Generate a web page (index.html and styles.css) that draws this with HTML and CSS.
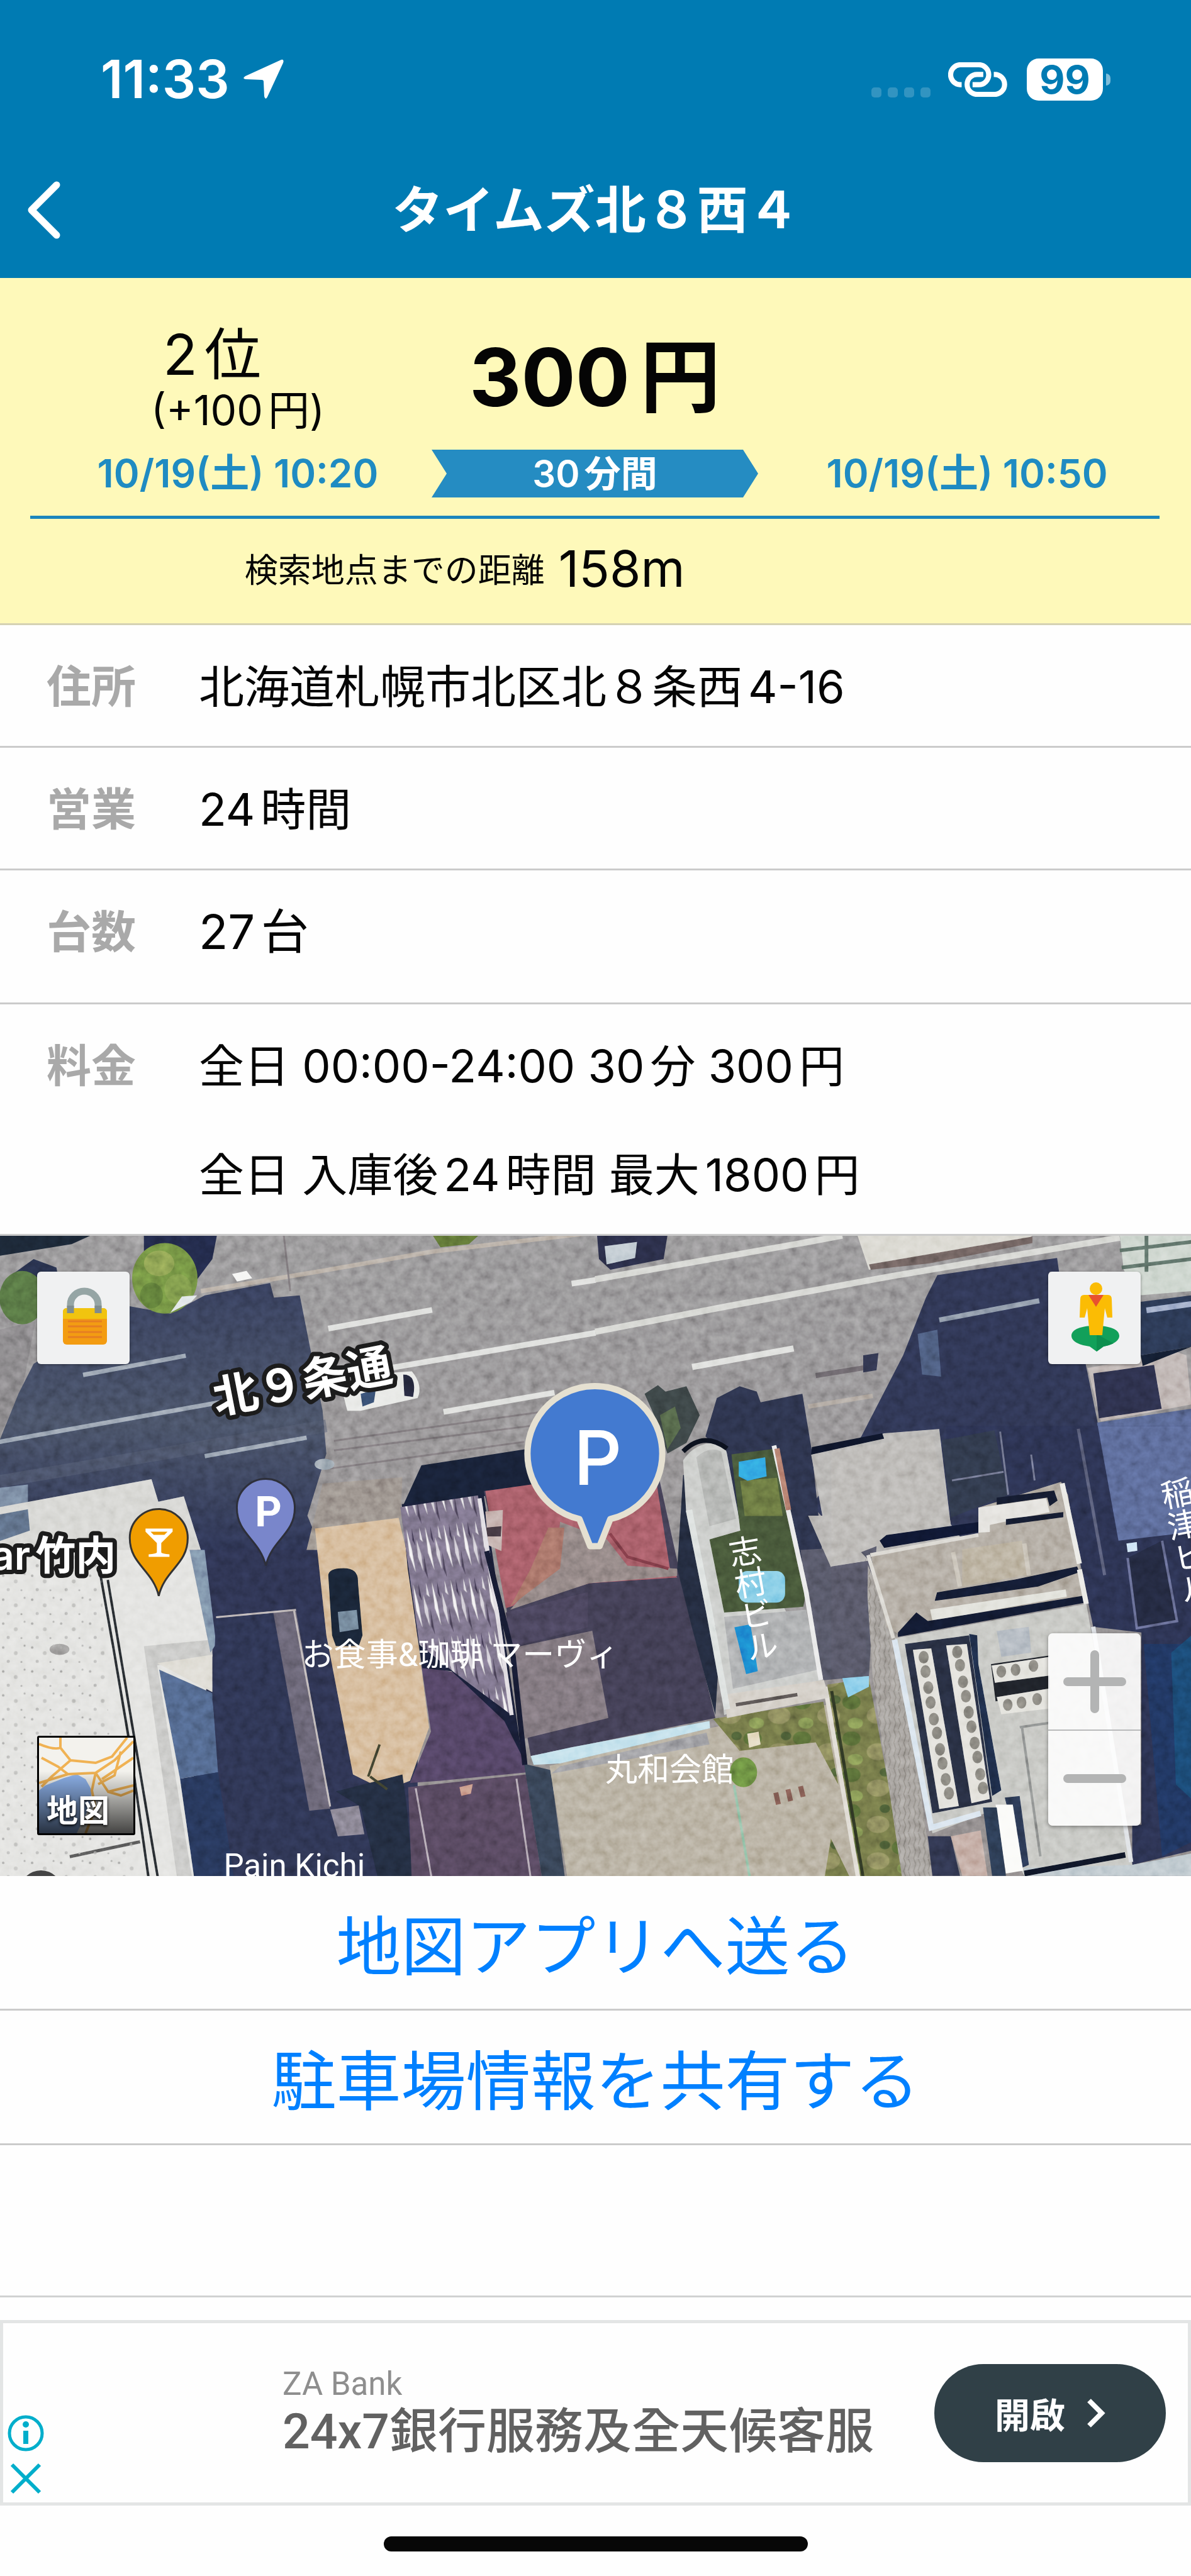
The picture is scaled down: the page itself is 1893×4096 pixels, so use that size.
FILE: index.html
```html
<!DOCTYPE html>
<html lang="ja">
<head>
<meta charset="utf-8">
<meta name="viewport" content="width=device-width, initial-scale=1">
<title>タイムズ北８西４</title>
<link rel="stylesheet" href="styles.css">
</head>
<body>
<header class="top">
  <div class="status">
    <div class="status-left">
      <span class="clock">11:33</span>
      <svg class="arrow" viewBox="0 0 64 64" aria-hidden="true"><path d="M60 1Q65 0 63 6L38 60Q35 66 33 59L32 36Q32 33 29 33L4 32Q-3 31 3 27Z" fill="#fff"/></svg>
    </div>
    <div class="status-right">
      <span class="dots"><i></i><i></i><i></i><i></i></span>
      <svg class="link" viewBox="447 122 286 168" aria-hidden="true"><g fill="none" stroke="#fff" stroke-width="25"><path d="M512 231H507A48.500 48.500 0 0 1 507 134H595A48.500 48.500 0 0 1 595 231H565"/><path d="M617 181H587A48.500 48.500 0 0 0 587 278H672A48.500 48.500 0 0 0 672 181H668"/></g></svg>
      <span class="battery">99</span>
    </div>
  </div>
  <nav class="nav">
    <button class="back" aria-label="戻る"><svg viewBox="0 0 54 92" aria-hidden="true"><path d="M48 6L8 46L48 86" fill="none" stroke="#fff" stroke-width="11" stroke-linecap="round" stroke-linejoin="round"/></svg></button>
    <h1>タイムズ北８西４</h1>
  </nav>
</header>

<main>
  <section class="summary">
    <div class="cols price-row">
      <div class="rank"><p class="place">2位</p><p class="diff">(+100円)</p></div>
      <p class="price">300円</p>
    </div>
    <div class="cols time-row">
      <time>10/19(土) 10:20</time>
      <span class="span">30分間</span>
      <time>10/19(土) 10:50</time>
    </div>
    <p class="distance"><span>検索地点までの距離</span> <b>158m</b></p>
  </section>

  <dl class="info">
    <div><dt>住所</dt><dd>北海道札幌市北区北８条西4-16</dd></div>
    <div><dt>営業</dt><dd>24時間</dd></div>
    <div class="tall"><dt>台数</dt><dd>27台</dd></div>
    <div><dt>料金</dt><dd>全日 00:00-24:00 30分 300円<br>全日 入庫後24時間 最大1800円</dd></div>
  </dl>

  <section class="map">
    <svg class="aerial" viewBox="0 0 1893 1017" preserveAspectRatio="xMidYMid slice">
      <defs>
        <linearGradient id="road" x1="0" y1="0" x2="0" y2="1"><stop offset="0" stop-color="#858385"/><stop offset="1" stop-color="#7c7878"/></linearGradient>
        <linearGradient id="shade" x1="0" y1="0" x2="0" y2="1"><stop offset="0" stop-color="#2f364f"/><stop offset=".5" stop-color="#3f4759"/><stop offset="1" stop-color="#252b47"/></linearGradient>
        <pattern id="speck" width="46" height="38" patternUnits="userSpaceOnUse"><g fill="#9c9c9a"><circle cx="6" cy="8" r="2"/><circle cx="26" cy="17" r="3" opacity=".6"/><circle cx="40" cy="5" r="1.500"/><circle cx="14" cy="30" r="2.500" opacity=".7"/><circle cx="35" cy="31" r="1.500"/></g></pattern>
        <pattern id="tin" width="64" height="190" patternUnits="userSpaceOnUse" patternTransform="rotate(-7)"><path d="M0 0h64v190H0z" fill="#6d6579"/><path d="M6 0l10 70 4 80-14-60z" fill="#f0eef0"/><path d="M36 40l10 50 0 60-12-50z" fill="#cfcad4"/><path d="M24 0l6 60-8-20z" fill="#352e44"/><path d="M54 90l6 90-9-30z" fill="#3c3548"/><path d="M50 0l7 50-9-10z" fill="#dcd8e0"/></pattern>
        <pattern id="grass" width="130" height="170" patternUnits="userSpaceOnUse"><path d="M0 0h130v170H0z" fill="#65693f"/><ellipse cx="24" cy="32" rx="24" ry="34" fill="#4d5f30"/><ellipse cx="94" cy="94" rx="30" ry="40" fill="#7b7a52"/><ellipse cx="34" cy="130" rx="20" ry="26" fill="#75854a"/><ellipse cx="112" cy="20" rx="14" ry="20" fill="#42522f"/></pattern>
        <pattern id="gravel" width="26" height="60" patternUnits="userSpaceOnUse"><path d="M0 0h26v60H0z" fill="#99948f"/><path d="M5 0l6 30-5 30M18 5l5 25-6 30" fill="none" stroke="#7c7873" stroke-width="3"/></pattern>
        <filter id="grain" x="0" y="0" width="100%" height="100%"><feTurbulence type="fractalNoise" baseFrequency=".07" numOctaves="3" seed="4"/><feColorMatrix type="saturate" values="0"/><feComponentTransfer><feFuncA type="linear" slope="0" intercept="1"/></feComponentTransfer></filter>
      </defs>
      <rect width="1893" height="1017" fill="url(#road)"/>

      <!-- street and shadows, north-west -->
      <g transform="matrix(.6037 0 0 .3396 0 -14)">
        <path d="M0 40H240L190 80L0 135Z" fill="#18222f"/>
        <path d="M380 40H572L560 150L520 245L470 230L380 130Z" fill="#1e2541"/>
        <path d="M20 240L90 150L150 190L170 380H20Z" fill="#232b43"/>
        <path d="M1140 40H1260L1235 80L1160 95Z" fill="#53662f"/>
        <path d="M0 480L95 440L60 760L0 980Z" fill="#777577"/>
        <path d="M90 640L340 370L450 405L540 320L712 262L722 330L790 320L850 860L860 1060L810 1350L860 1568H0V1000L50 780Z" fill="url(#shade)"/>
        <ellipse cx="60" cy="330" rx="60" ry="125" fill="#4c673b"/>
        <ellipse cx="435" cy="240" rx="86" ry="165" fill="#647e3a"/>
        <ellipse cx="420" cy="170" rx="40" ry="60" fill="#7b9148"/>
        <ellipse cx="470" cy="290" rx="36" ry="70" fill="#6f8842"/>
        <ellipse cx="400" cy="320" rx="30" ry="60" fill="#556f33"/>
        <path d="M450 400L480 325L520 320L505 350Z" fill="#dde3e4"/>
        <path d="M612 220L650 205L665 240L625 255Z" fill="#f4f4f2"/>
        <g class="line">
          <path d="M530 300L850 205L1140 115L1568 25" stroke="#aca196" stroke-width="7"/>
          <path d="M865 475L1138 388M1505 265L1568 248M1010 665L1568 495M1168 865L1460 775" stroke="#d9dad7" stroke-width="9"/>
          <path d="M220 692L490 602M0 1005L580 820M540 1072L808 985" stroke="#8793a3" stroke-width="7"/>
          <path d="M880 1000L1568 830M880 1045L1400 930M870 1130L1380 1005M748 40L765 300" stroke="#6d686b" stroke-width="3"/>
          <path d="M0 1190L860 930" stroke="#4a5163" stroke-width="20" opacity=".5"/>
        </g>
        <path d="M905 790L1040 680L1085 675Q1115 740 1100 800L950 860H915Z" fill="#e4e5e2"/>
        <path d="M1062 690Q1100 690 1088 795L1065 790Z" fill="#202234"/>
        <path d="M950 780L990 760L985 820L955 840Z" fill="#2f4361"/>
        <path d="M0 1220L75 1205V1290L0 1310Z" fill="#6a7890"/>
        <path d="M0 1310L400 1180L418 1285L485 1260L540 1568H0Z" fill="#cfcfcb"/>
        <path d="M0 1345L75 1320L80 1420L0 1470Z" fill="#526176"/>
        <path d="M850 1200L1060 1170L1050 1568H800Z" fill="#877e79"/>
        <path d="M1060 1310L1110 1115L1400 1035L1440 1230L1270 1260Z" fill="#151d30"/>
        <circle cx="855" cy="1110" r="26" fill="#8b98a3"/>
      </g>

      <!-- street, north-east -->
      <g transform="matrix(.6037 0 0 .3396 946 -14)">
        <path d="M5 40H190L180 150L40 200L10 150Z" fill="#25283f"/>
        <path d="M25 90L110 70L105 145L30 175Z" fill="#b8c3cb"/>
        <path d="M690 40H1150L1130 70L720 200Z" fill="#d3d1c8"/>
        <path d="M720 175L1000 90L1150 45V75L880 170L725 200Z" fill="#625654"/>
        <path d="M1380 40H1568V300L1430 320L1390 200Z" fill="#c3cdc4"/>
        <path d="M900 225L1215 145L1220 210H1195V640H1290L1320 900L1400 1568H700L570 1300L700 980L810 600L870 330Z" fill="#292f49"/>
        <path d="M1435 350L1568 320V560L1435 600Z" fill="#26324a"/>
        <g class="line">
          <path d="M0 245L560 70L650 40M0 490L350 370L780 230L1380 50" stroke="#cfd0cb" stroke-width="10"/>
          <path d="M255 655L522 568" stroke="#d9dad7" stroke-width="10"/>
          <path d="M905 435L1168 345" stroke="#7c8799" stroke-width="8"/>
          <path d="M580 695L720 655" stroke="#5f5a5f" stroke-width="8"/>
          <path d="M560 840L730 790" stroke="#a1978e" stroke-width="7"/>
          <path d="M1380 110L1568 70M1385 190L1568 150M1450 40V210" stroke="#53645c" stroke-width="6"/>
          <path d="M1450 390L1568 360" stroke="#8c9bbd" stroke-width="9"/>
        </g>
        <path d="M130 780L165 740L185 770L240 745L275 880L240 1010L190 1060L160 900Z" fill="#343c3d"/>
        <path d="M170 880L210 840L225 940L190 1040Z" fill="#4b5b41"/>
        <path d="M290 980L320 800L380 745L425 770L435 820L545 780L570 1050L600 1568H380L340 1060Z" fill="#272d43"/>
        <path d="M848 500L900 480L910 700L860 690Z" fill="#42506d"/>
        <path d="M705 600L745 590L740 670L705 680Z" fill="#2b2f45"/>
        <path d="M568 1065L760 965L905 945L935 1390L1010 1568H620Z" fill="#a9a7a4"/>
        <path d="M568 1065L570 1030L755 965L760 990Z" fill="#0c1224"/>
        <path d="M1295 660L1530 585L1555 600L1568 830L1330 910Z" fill="#b3a8a5"/>
        <path d="M1310 685L1470 645L1490 850L1325 895Z" fill="#272a42"/>
        <path d="M1320 915L1568 850V1568H1400L1350 1300Z" fill="#4d5a80"/>
        <path d="M1440 650L1568 560L1435 600Z" fill="#111a2b"/>
        <path class="line" d="M1325 1080L1430 1050M1415 990L1430 1100" stroke="#2a3654" stroke-width="8"/>
      </g>

      <!-- buildings, south-west -->
      <g transform="matrix(.6037 0 0 .3396 0 499)">
        <path d="M500 0H1100V1568H500Z" fill="#282d47"/>
        <path d="M0 0H520L560 490L510 1000L520 1568H0Z" fill="#dededb"/>
        <path d="M380 450L560 420V500L415 540L510 1568H470Z" fill="#bfbfbd"/>
        <path d="M415 530L560 490V665Z" fill="#d9d6cd"/>
        <path d="M420 560L560 670L575 1040L475 1070Z" fill="#475a7a"/>
        <path d="M475 1070L575 1040L620 1568H515Z" fill="#22304f"/>
        <path d="M500 0H540L570 440L555 480Z" fill="#6e7f9a"/>
        <path d="M570 315L780 280L870 1210L945 1190L965 1340L1000 1320L1025 1568H620L560 700Z" fill="#282e48"/>
        <path d="M720 290L780 280L870 1210L815 1220Z" fill="#5b5765"/>
        <path d="M870 1215L945 1195L960 1330L890 1340Z" fill="#77737f"/>
        <path d="M830 -100L1050 -150L1070 0L1130 830L1080 1080L1015 1125L930 1050L860 400Z" fill="#ceae87"/>
        <path d="M865 120Q865 85 905 85Q945 85 943 150L955 400L945 450H885L875 400Z" fill="#16202f"/>
        <path d="M890 290L940 280L945 370L895 385Z" fill="#647587"/>
        <path d="M885 1130L1060 1050L1070 1180L1090 1568H1000L950 1200Z" fill="#1e2738"/>
        <path d="M1110 540L1215 580L1350 790L1390 1040L1160 1080L1080 1090L1135 850Z" fill="#483b57"/>
        <path d="M1075 1110L1385 1050L1430 1568H1085Z" fill="#4b3e52"/>
        <path d="M1380 1000L1450 1030L1490 1568H1430Z" fill="#303b4b"/>
        <path d="M1210 1110L1245 1095L1240 1140L1215 1150Z" fill="#b97f72"/>
        <circle cx="158" cy="465" r="26" fill="#8d8b8a"/>
        <g class="line">
          <path d="M265 110L300 460L340 880L395 1568M285 140L420 1568" stroke="#23272b" stroke-width="4"/>
          <path d="M185 1435L370 1365" stroke="#4d4d4d" stroke-width="5"/>
          <path d="M775 285L870 1200M570 315L780 280" stroke="#b3abab" stroke-width="3"/>
          <path d="M1095 1115L1140 1568M1360 1070L1400 1568" stroke="#a89ca8" stroke-width="3"/>
          <path d="M970 1060L1000 910M975 1060L1020 1120" stroke="#383a2a" stroke-width="4"/>
        </g>
      </g>
      <path d="M0 500L160 500L170 740L220 1017H0Z" fill="url(#speck)"/>

      <!-- ground, south-east -->
      <g transform="matrix(.6037 0 0 .3396 946 499)">
        <path d="M-120 1010L310 830L620 720L700 1568H-70Z" fill="#aaa18f"/>
        <path d="M310 790L600 710L640 1100L580 900L380 940Z" fill="url(#grass)"/>
        <ellipse cx="390" cy="1040" rx="36" ry="70" fill="#5f7e3a"/>
        <path d="M620 1350L680 1568H600Z" fill="url(#grass)"/>
        <path d="M610 630L720 600L820 1568H700Z" fill="url(#grass)"/>
        <path d="M540 0L740 -20L720 590L600 610L560 250Z" fill="#4b4c5a"/>
        <path d="M560 -160L610 -160L720 50L620 80Z" fill="#aaa7a4"/>
        <path d="M710 40L800 420L890 1568H810L730 600Z" fill="url(#gravel)"/>
        <path d="M650 600L720 590V640L665 690Z" fill="#78c4e6"/>
        <g class="line">
          <path d="M605 640L695 1568" stroke="#dad5cc" stroke-width="7"/>
          <path d="M622 660L708 1568" stroke="#29301f" stroke-width="5"/>
          <path d="M365 1100L410 1568" stroke="#80b698" stroke-width="4"/>
          <path d="M475 1135L482 1190M507 1120L514 1175M540 1105L547 1155" stroke="#725048" stroke-width="8"/>
        </g>
        <path d="M400 860L430 850L435 910L405 925Z" fill="#ded1b2"/>
      </g>

      <!-- centre block: tin roof, red roof, pool building -->
      <g transform="matrix(.4653 0 0 .4653 611 203)">
        <path d="M60 480L340 450L470 1340L410 1220L230 1050L130 1040L80 700Z" fill="#161b31"/>
        <path d="M55 490L320 450L435 1200L240 1055L120 960L75 640Z" fill="url(#tin)"/>
        <path d="M340 435L940 400L1010 720L1130 1210L500 1340L440 1000L395 680Z" fill="#393649"/>
        <path d="M345 435L520 410L930 410L975 700L1000 730L700 750L415 835L380 640Z" fill="#96515a"/>
        <path d="M600 540L760 600L830 690L1000 700V725L700 750L430 840L500 760L590 660Z" fill="#7e7473"/>
        <path d="M560 560L615 560L600 700L480 790L430 830L500 700Z" fill="#96645a"/>
        <path d="M415 850L695 780V900L430 970Z" fill="#403b50"/>
        <path d="M440 970L710 912L765 1210L480 1280Z" fill="#6f676d"/>
        <path d="M345 505L405 500L400 640L355 620Z" fill="#b8a09c"/>
        <path d="M345 560L400 555L398 590L350 590Z" fill="#3a3038"/>
        <path d="M500 1340L640 1310L1110 1220L1112 1245L600 1365L510 1370Z" fill="#b7dbe8"/>
        <path d="M600 1375L1100 1260L1110 1300L570 1400Z" fill="#8c8c91"/>
        <path d="M1000 700L1020 380L1180 400L1130 1200L1050 900Z" fill="#1f2637"/>
        <path d="M1020 330Q1060 270 1130 270Q1165 275 1170 310L1215 550L1500 1090L1160 1200L1130 900L1030 500Z" fill="#c1c3c0"/>
        <path d="M1065 320Q1110 280 1150 300L1200 530L1110 555Z" fill="#a5a7a4"/>
        <path d="M1185 310L1340 290L1440 780L1430 830L1160 850L1110 600L1215 570Z" fill="#3d4b31"/>
        <path d="M1215 400L1340 390L1360 520L1230 520Z" fill="#5d6939"/>
        <path d="M1210 335L1300 320L1305 385L1240 400L1210 385Z" fill="#2b97dc"/>
        <rect x="1210" y="708" width="158" height="108" rx="30" fill="#75c4e2"/>
        <path d="M1160 865L1440 840L1480 1045L1190 1110Z" fill="#9d9fa1"/>
        <path d="M1195 900L1250 890L1275 1050L1235 1060Z" fill="#1877c6"/>
        <path d="M1160 1130L1500 1080L1520 1140L1170 1210Z" fill="#cbc5bc"/>
        <g fill="none">
          <path d="M325 460L385 850L435 1200" stroke="#dbd6dd" stroke-width="14"/>
          <path d="M350 640L440 1000L480 1370" stroke="#13172b" stroke-width="18"/>
          <path d="M1330 280L1440 780L1490 1080" stroke="#e6e6e6" stroke-width="16"/>
          <path d="M1040 500L1110 850L1170 1180" stroke="#d7dcda" stroke-width="22"/>
          <path d="M1020 300Q1090 230 1170 290" stroke="#0a0f1a" stroke-width="16"/>
          <path d="M1340 290L1380 500" stroke="#a66e60" stroke-width="18"/>
          <path d="M1200 1165L1410 1130" stroke="#4f4a49" stroke-width="12"/>
          <path d="M770 580L830 660L970 700" stroke="#6f343e" stroke-width="10"/>
        </g>
      </g>

      <!-- office block with roof fans -->
      <g transform="matrix(.3647 0 0 .4558 1321 302)">
        <path d="M500 50L730 10L780 240L1010 190L1140 700L1350 720V1390H1310V1530L1568 1480V0H500Z" fill="#262c47"/>
        <path d="M1160 0H1568V370L1250 400Z" fill="#4f5c84"/>
        <path d="M1360 760H1568V1450L1440 1500Z" fill="#1c2f54"/>
        <path d="M1480 790L1568 730V1300L1500 1250Z" fill="#174065"/>
        <path d="M480 50L710 15L770 240L520 320Z" fill="#2a3242"/>
        <path d="M0 90L440 30L520 340L420 350L0 480Z" fill="#aeaba7"/>
        <path d="M0 490L160 470L150 860L0 880Z" fill="#4c4c5a"/>
        <path d="M170 445L640 375V285L840 235L1000 195L1030 240L1080 490L1110 610L300 730L240 700Z" fill="#a39b90"/>
        <path d="M570 430L830 400L850 520L570 560Z" fill="#ada28d"/>
        <path d="M210 400L240 380L640 335V370L230 425Z" fill="#0d142b"/>
        <path d="M720 250L970 225L985 260L950 280L940 250L720 275Z" fill="#12182a"/>
        <path d="M640 285L935 252L950 300L690 345V370L640 372Z" fill="#dfddd8"/>
        <path d="M760 325L1010 300V318L760 345Z" fill="#12182a"/>
        <path d="M460 580L800 535L1070 490L1080 510L900 560L450 610Z" fill="#11182c"/>
        <path d="M430 640L1020 570L1025 595L440 680Z" fill="#dcdcd4"/>
        <path d="M290 720L370 650L420 680L1110 590V615L290 735Z" fill="#10172b"/>
        <path d="M275 740L1110 620L1310 1530L840 1568L700 1340L440 1420Z" fill="#bcbdb8"/>
        <path d="M320 760L440 1350L700 1310L600 730Z" fill="#23293a"/>
        <path d="M355 780L435 775L555 1325L470 1335Z" fill="#dedcd5"/>
        <path d="M500 765L590 760L690 1300L610 1315Z" fill="#dedcd5"/>
        <path d="M600 725L635 730L640 830L740 1270L700 1290Z" fill="#1a2740"/>
        <g fill="#77756f"><circle cx="402" cy="806" r="22"/><circle cx="410" cy="856" r="22"/><circle cx="422" cy="912" r="22"/><circle cx="432" cy="964" r="22"/><circle cx="446" cy="1022" r="22"/><circle cx="460" cy="1070" r="22"/><circle cx="473" cy="1127" r="22"/><circle cx="484" cy="1176" r="22"/><circle cx="498" cy="1232" r="22"/><circle cx="512" cy="1280" r="22"/><circle cx="548" cy="788" r="22"/><circle cx="560" cy="834" r="22"/><circle cx="573" cy="892" r="22"/><circle cx="586" cy="942" r="22"/><circle cx="598" cy="998" r="22"/><circle cx="610" cy="1048" r="22"/><circle cx="624" cy="1105" r="22"/><circle cx="636" cy="1154" r="22"/><circle cx="648" cy="1214" r="22"/><circle cx="660" cy="1262" r="22"/></g>
        <path d="M720 715L860 700L870 790L740 805Z" fill="#a5adb6"/>
        <path d="M695 830L950 800V930L715 960Z" fill="#1b1e24"/>
        <path d="M698 835L950 805V870L712 895ZM720 945L950 915V985L740 1005Z" fill="#deddd6"/>
        <g fill="#77756f"><circle cx="740" cy="856" r="21"/><circle cx="802" cy="850" r="21"/><circle cx="880" cy="836" r="21"/><circle cx="768" cy="972" r="21"/><circle cx="828" cy="964" r="21"/><circle cx="896" cy="952" r="21"/></g>
        <path d="M755 1295L820 1290L860 1530L830 1540Z" fill="#26324a"/>
        <path d="M715 1320H790L835 1550L760 1560Z" fill="#fafaf7"/>
        <path d="M420 1430L520 1430L560 1568H440Z" fill="#2a2f45"/>
        <path d="M520 1430L650 1410L680 1568H570Z" fill="#b89c92"/>
        <path d="M660 1330L720 1330L760 1568H700Z" fill="#27354a"/>
        <path d="M1290 460L1440 400L1500 680L1330 700Z" fill="#1f2438"/>
        <path d="M1285 410L1330 405L1332 435L1290 440Z" fill="#c9e2f5"/>
        <path d="M840 1540L1310 1530L1568 1490V1568H840Z" fill="#b3bfc6"/>
        <g class="line">
          <path d="M275 745L435 1400L650 1350" stroke="#d3e0ec" stroke-width="9"/>
          <path d="M170 450L640 380M160 450L270 740" stroke="#d4d1ca" stroke-width="6"/>
          <path d="M1005 200L1080 480M1080 500L1110 620" stroke="#e7e6e1" stroke-width="8"/>
          <path d="M1140 700L1305 1520" stroke="#d7dbe0" stroke-width="7"/>
          <path d="M530 440L560 560M840 410L860 520" stroke="#bfb8ab" stroke-width="7"/>
          <path d="M525 190L750 160M735 20L770 240M870 100L885 190" stroke="#666a80" stroke-width="3"/>
          <path d="M1290 460L1330 705L1505 680L1440 400" stroke="#5a5f80" stroke-width="4"/>
          <path d="M840 1560L1280 1495" stroke="#0d1322" stroke-width="9"/>
          <path d="M820 1050L950 1035M830 1050L910 1500" stroke="#7b7d7c" stroke-width="4"/>
          <path d="M1075 10L1190 520" stroke="#4d5168" stroke-width="5"/>
        </g>
      </g>
      <rect class="grain" width="1893" height="1017" filter="url(#grain)"/>

      <!-- place labels -->
      <text class="street" transform="translate(481 231) rotate(-11)" y="26">北９条通</text>
      <text class="poi" x="185" y="530">ar竹内</text>
      <text class="place-name" x="480" y="683">お食事&amp;珈琲 マーヴィ</text>
      <text class="place-name" x="962" y="866">丸和会館</text>
      <text class="vertical" transform="translate(1176 476) rotate(-10)">志村ビル</text>
      <text class="vertical" transform="translate(1862 384) rotate(-11)">稲津ビル</text>
      <circle cx="66" cy="1042" r="34" fill="#444"/>
      <text class="place-name" x="356" y="1018">Pain Kichi</text>

      <path d="M253 572C243 530 207 522 207 480A46 46 0 0 1 299 480C299 522 263 530 253 572Z" fill="#f09d00" stroke="#333" stroke-width="3"/>
      <path d="M232 465H275V470L257 488V503Q258 505 270 506V510H237V506Q249 505 250 503V488L232 470ZM240 470L245 475H262L267 470Z" fill="#fff" fill-rule="evenodd"/>
      <path d="M423 524C413 482 377 474 377 432A46 46 0 0 1 469 432C469 474 433 482 423 524Z" fill="#7986cb" stroke="#2d2f3a" stroke-width="3"/>
      <text class="pin-small" x="427" y="462">P</text>
      <path d="M938 493L921 450A107 107 0 1 1 970 450L953 493Z" fill="#437ad0" stroke="#e5e0d1" stroke-width="10" stroke-linejoin="round"/>
      <text class="pin-main" x="950" y="396">P</text>
    </svg>
    <button class="tool lock" aria-label="ロック"><svg viewBox="0 0 147 147" aria-hidden="true"><path d="M53 66V52a22 21 0 0 1 44 0V66" fill="none" stroke="#95a5a5" stroke-width="11"/><rect x="41" y="58" width="70" height="58" rx="6" fill="#f39c12"/><path d="M41 75V64q0-6 6-6H105q6 0 6 6V75Z" fill="#f1c40f"/><path d="M53 66V54M97 66V54" stroke="#7f8c8d" stroke-width="11"/><path d="M49 79H103M49 87H103M49 96H103M49 104H103" stroke="#e67e22" stroke-width="3"/></svg></button>
    <button class="tool street-view" aria-label="ストリートビュー"><svg viewBox="0 0 147 147" aria-hidden="true"><path d="M37 102C37 92 52 86 75 86S113 92 113 102C113 112 98 117 88 119L77 127L66 119C52 117 37 112 37 102Z" fill="#12a05a"/><path d="M80 101L104 114Q95 118 88 119L77 127V101Z" fill="#0d8f4f"/><circle cx="76" cy="27" r="10" fill="#fbbc04"/><path d="M57 37H95Q101 37 101 44L102 73H94L90 58L86 101H66L62 58L58 73H50L51 44Q51 37 57 37Z" fill="#fbbc04"/><path d="M64 37H88L76 56Z" fill="#e8512f"/></svg></button>
    <div class="zoom">
      <button aria-label="拡大"><svg viewBox="0 0 100 100" aria-hidden="true"><path d="M7 50H93M50 7V93" stroke="#b3b4b4" stroke-width="14" stroke-linecap="round"/></svg></button>
      <button aria-label="縮小"><svg viewBox="0 0 100 100" aria-hidden="true"><path d="M7 50H93" stroke="#b3b4b4" stroke-width="14" stroke-linecap="round"/></svg></button>
    </div>
    <button class="map-type"><svg viewBox="0 0 150 152" aria-hidden="true"><defs><linearGradient id="dim" x1="0" y1="0" x2="0" y2="1"><stop offset=".35" stop-opacity="0"/><stop offset="1" stop-opacity=".72"/></linearGradient></defs><path d="M0 0H150V152H0Z" fill="#f3f2ed"/><path d="M10 76L40 64L60 58L74 66L84 84L80 110L60 152H0V84Z" fill="#8eb2ea"/><g fill="none" stroke="#f0b253" stroke-width="4"><path d="M0 10Q24 20 34 16V0M34 16L50 36L20 62L4 78M50 36L90 40L116 30L140 0M4 32L30 46L46 58L90 56L120 36L150 6M90 56L84 84L90 112L74 152M90 56L110 86L150 76M100 66L150 32M0 72L46 58M110 86L130 92L150 84M130 22L120 60L94 74"/></g><path d="M0 0H150V152H0Z" fill="url(#dim)"/></svg><span>地図</span></button>
  </section>

  <section class="actions">
    <button>地図アプリへ送る</button>
    <button>駐車場情報を共有する</button>
    <div class="blank"></div>
  </section>
</main>

<aside class="ad" lang="zh-Hant">
  <div class="ad-icons">
    <button aria-label="廣告資訊"><svg viewBox="0 0 60 60" aria-hidden="true"><circle cx="30" cy="30" r="26" fill="none" stroke="#00aecb" stroke-width="5"/><path d="M30 26V47" stroke="#00aecb" stroke-width="8"/><circle cx="30" cy="16" r="5" fill="#00aecb"/></svg></button>
    <button aria-label="關閉"><svg viewBox="0 0 60 60" aria-hidden="true"><path d="M8 8L52 52M52 8L8 52" stroke="#00aecb" stroke-width="6"/></svg></button>
  </div>
  <div class="ad-text"><p class="brand">ZA Bank</p><p class="headline">24x7銀行服務及全天候客服</p></div>
  <a class="open" href="#">開啟<svg viewBox="0 0 30 46" aria-hidden="true"><path d="M4 3L24 23L4 43" fill="none" stroke="#fff" stroke-width="8"/></svg></a>
</aside>
<div class="home-bar"></div>
</body>
</html>
```
FILE: styles.css
```css
* { box-sizing: border-box; }
body {
  margin: 0;
  background: #fefefe;
  color: #050505;
  font-family: Inter, "Noto Sans CJK JP", sans-serif;
  text-autospace: normal;
}
h1, p, dl, dd { margin: 0; }
button { border: 0; margin: 0; padding: 0; background: none; font: inherit; color: inherit; }
svg { display: block; }

.top { background: #007bb3; color: #fff; }
.status {
  display: flex;
  justify-content: space-between;
  padding: 92px 127px 66px 160px;
  height: 226px;
}
.status-left, .status-right { display: flex; align-items: center; }
.status-left { gap: 22px; }
.clock { font-size: 84px; font-weight: 600; line-height: 68px; }
.arrow { width: 64px; height: 64px; }
.dots { display: flex; gap: 10px; margin: 42px 28px 0 0; }
.dots i { width: 16px; height: 16px; border-radius: 5px; background: #3294c1; }
.link { width: 94px; height: 55px; margin-right: 31px; }
.battery {
  position: relative;
  width: 121px;
  border-radius: 19px;
  background: #fff;
  color: #007bb3;
  font-size: 62px;
  font-weight: 700;
  line-height: 67px;
  text-align: center;
  margin-right: 13px;
}
.battery::after {
  content: "";
  position: absolute;
  left: 126px;
  top: 24px;
  width: 7px;
  height: 19px;
  border-radius: 0 7px 7px 0;
  background: #7fbdd9;
}
.nav { display: grid; grid-template-columns: 144px 1fr 144px; align-items: center; height: 216px; }
.back svg { width: 54px; height: 92px; margin-left: 42px; }
.nav h1 { font-size: 81px; font-weight: 600; line-height: 96px; text-align: center; white-space: nowrap; }

.summary { background: #fef9ba; border-bottom: 3px solid #d5d2b4; padding-top: 70px; }
.cols { display: grid; grid-template-columns: 616fr 519px 664fr; padding: 0 24px 0 70px; align-items: center; text-align: center; }
.place { padding-right: 82px; font-size: 90px; line-height: 104px; }
.diff { font-size: 66px; line-height: 72px; }
.price { font-size: 128px; font-weight: 700; line-height: 176px; white-space: nowrap; }
.time-row { margin-top: 27px; line-height: 76px; font-size: 62px; font-weight: 600; color: #1f8bc2; white-space: nowrap; }
.span {
  background: #258cc2;
  color: #fff;
  font-size: 58px;
  clip-path: polygon(0 0, calc(100% - 24px) 0, 100% 50%, calc(100% - 24px) 100%, 0 100%, 24px 50%);
}
.distance {
  display: flex;
  align-items: center;
  gap: 22px;
  margin: 29px 50px 0 48px;
  border-top: 5px solid #1b86bd;
  padding: 0 0 10px 18%;
  height: 171px;
  font-size: 53px;
}
.distance b { font-size: 80px; font-weight: 400; }

.info { font-size: 72px; line-height: 173px; }
.info div { display: grid; grid-template-columns: 242px 1fr; padding: 11px 24px 8px 74px; border-bottom: 3px solid #cbcbcb; }
.info .tall { padding-bottom: 26px; }
.info .tall dd { font-size: 76px; }
.info dt { color: #a9a9a9; font-size: 71px; font-weight: 700; }
.info dd { font-family: Inter, "Noto Sans CJK TC", "Noto Sans CJK JP", sans-serif; }

.map { position: relative; height: 1018px; overflow: hidden; }
.aerial { width: 100%; height: 100%; }
.line { fill: none; }
.line, .line path { vector-effect: non-scaling-stroke; }
.grain { mix-blend-mode: overlay; opacity: .45; }
.aerial text { fill: #fff; font-size: 51px; }
.aerial .street, .aerial .poi { stroke: #1c1c1c; stroke-width: 14px; stroke-linejoin: round; paint-order: stroke; font-weight: 600; }
.aerial .street { font-size: 72px; text-anchor: middle; }
.aerial .poi { font-size: 64px; text-anchor: end; }
.place-name { font-family: Roboto, "Noto Sans CJK JP", sans-serif; }
.vertical { writing-mode: vertical-rl; }
.aerial .pin-small { font-family: Roboto, sans-serif; font-size: 66px; font-weight: 700; text-anchor: middle; }
.aerial .pin-main { font-size: 120px; font-weight: 500; text-anchor: middle; }
.tool { position: absolute; top: 57px; width: 147px; height: 147px; border-radius: 6px; background: #f0f1f2; box-shadow: 0 1px 4px #0006; }
.lock { left: 59px; }
.street-view { right: 80px; }
.zoom { position: absolute; right: 80px; bottom: 80px; width: 147px; border-radius: 7px; background: #ffffffe0; box-shadow: 0 2px 6px #0006; }
.zoom button { display: grid; place-items: center; width: 100%; height: 153px; }
.zoom button + button { border-top: 2px solid #b9babb; }
.zoom svg { width: 100px; height: 100px; }
.map-type { position: absolute; left: 59px; bottom: 65px; width: 156px; height: 158px; border: 3px solid #000; border-radius: 3px; overflow: hidden; color: #fff; }
.map-type svg { width: 100%; height: 100%; }
.map-type span { position: absolute; left: 12px; bottom: 8px; font-size: 50px; font-weight: 600; line-height: 56px; text-shadow: 0 2px 4px #000; }

.actions button { display: block; width: 100%; height: 214px; border-bottom: 3px solid #cbcbcb; color: #0080ff; font-size: 103px; text-align: center; }
.blank { height: 242px; border-bottom: 3px solid #d0d1d1; }

.ad {
  display: flex;
  align-items: center;
  height: 295px;
  margin-top: 36px;
  border: 5px solid #e3e5e5;
  padding: 0 35px 0 6px;
  font-family: Roboto, "Noto Sans CJK TC", sans-serif;
}
.ad-icons { display: grid; gap: 12px; align-self: end; width: 438px; padding-bottom: 8px; }
.ad-icons button { width: 60px; height: 60px; }
.ad-text { flex: 1; white-space: nowrap; text-autospace: no-autospace; }
.brand { font-size: 51px; line-height: 60px; color: #8e8e8e; }
.headline { font-size: 77px; font-weight: 500; line-height: 92px; color: #616161; }
.open {
  display: flex;
  align-items: center;
  justify-content: center;
  gap: 34px;
  width: 368px;
  height: 156px;
  border-radius: 78px;
  background: #304047;
  color: #fff;
  font-size: 56px;
  font-weight: 600;
  text-decoration: none;
}
.open svg { width: 30px; height: 46px; }
.home-bar { width: 674px; height: 24px; margin: 49px auto 39px; border-radius: 12px; background: #070707; }
```
